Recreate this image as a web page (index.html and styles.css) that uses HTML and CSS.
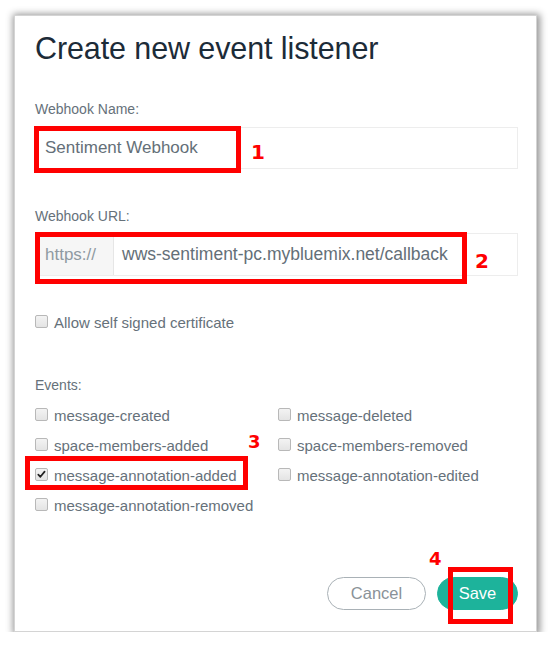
FILE: index.html
```html
<!DOCTYPE html>
<html>
<head>
<meta charset="utf-8">
<link rel="stylesheet" href="styles.css">
</head>
<body>
<div class="dialog">
  <h1 class="title">Create new event listener</h1>

  <div class="label label-name">Webhook Name:</div>
  <div class="input input-name">
    <span class="input-text">Sentiment Webhook</span>
    <span class="annot box1"></span>
    <span class="num n1">1</span>
  </div>

  <div class="label label-url">Webhook URL:</div>
  <div class="input input-url">
    <span class="prefix">https://</span>
    <span class="input-text url-text">wws-sentiment-pc.mybluemix.net/callback</span>
    <span class="annot box2"></span>
    <span class="num n2">2</span>
  </div>

  <div class="check-row allow-row"><span class="cb"></span><span class="cb-label">Allow self signed certificate</span></div>

  <div class="label label-events">Events:</div>
  <div class="events">
    <div class="check-row"><span class="cb"></span><span class="cb-label">message-created</span></div>
    <div class="check-row"><span class="cb"></span><span class="cb-label">message-deleted</span></div>
    <div class="check-row"><span class="cb"></span><span class="cb-label">space-members-added</span></div>
    <div class="check-row"><span class="cb"></span><span class="cb-label">space-members-removed</span></div>
    <div class="check-row"><span class="cb cb-checked"><svg width="11" height="11" viewBox="0 0 11 11"><path d="M2.3 5.6 L4.4 7.8 L8.6 2.6" fill="none" stroke="#222" stroke-width="1.7" stroke-linecap="round" stroke-linejoin="round"/></svg></span><span class="cb-label">message-annotation-added</span></div>
    <div class="check-row"><span class="cb"></span><span class="cb-label">message-annotation-edited</span></div>
    <div class="check-row"><span class="cb"></span><span class="cb-label">message-annotation-removed</span></div>
    <span class="annot box3"></span>
    <span class="num n3">3</span>
  </div>

  <div class="actions">
    <button class="btn btn-cancel">Cancel</button>
    <button class="btn btn-save">Save<span class="annot box4"></span><span class="num n4">4</span></button>
  </div>
</div>
</body>
</html>
```

FILE: styles.css
```css
html, body {
  margin: 0;
  padding: 0;
  background: #ffffff;
}

body {
  font-family: "Liberation Sans", Arial, sans-serif;
}

.dialog {
  position: relative;
  box-sizing: border-box;
  margin: 15px 0 0 14px;
  width: 523px;
  height: 617px;
  padding: 15px 18px 0 20px;
  background: #ffffff;
  border: 1px solid #d4d4d4;
  box-shadow: 1px 1px 7px 2px rgba(0, 0, 0, 0.42);
  display: flex;
  flex-direction: column;
}

.title {
  margin: 0;
  font-size: 30.5px;
  line-height: 34px;
  font-weight: normal;
  color: #1c2b38;
  letter-spacing: -0.1px;
}

.label {
  font-size: 14px;
  line-height: 16px;
  color: #66717a;
}

.label-name { margin-top: 36px; }
.label-url { margin-top: 39px; }
.label-events { margin-top: 40px; }

.input {
  position: relative;
  box-sizing: border-box;
  border: 1px solid #ededed;
  display: flex;
  align-items: center;
  background: #fff;
}

.input-name {
  margin-top: 10px;
  height: 42px;
  padding-left: 9px;
}

.input-url {
  margin-top: 9px;
  height: 43px;
}

.input-text {
  font-size: 17px;
  color: #646f78;
}

.url-text {
  font-size: 17.5px;
  padding-left: 8px;
}

.prefix {
  box-sizing: border-box;
  align-self: stretch;
  display: flex;
  align-items: center;
  width: 77px;
  padding-left: 8px;
  margin-left: 1px;
  background: #f6f6f6;
  border-right: 1px solid #e6e6e6;
  font-size: 17px;
  color: #8f9aa2;
}

.check-row {
  height: 30px;
  display: flex;
  align-items: center;
}

.allow-row {
  margin-top: 31px;
}

.cb {
  box-sizing: border-box;
  width: 13px;
  height: 13px;
  margin-top: -2px;
  border: 1px solid #b8b8b8;
  border-radius: 2px;
  background: linear-gradient(#f3f3f3, #e4e4e4);
  flex: none;
  display: flex;
  align-items: center;
  justify-content: center;
}

.cb svg { display: block; }

.cb-label {
  margin-left: 6px;
  font-size: 15px;
  color: #66717a;
}

.events {
  position: relative;
  margin-top: 7px;
  display: grid;
  grid-template-columns: 243px 1fr;
}

.actions {
  margin-top: 57px;
  display: flex;
  justify-content: flex-end;
  gap: 11px;
}

.btn {
  position: relative;
  box-sizing: border-box;
  height: 33px;
  border-radius: 17px;
  font-family: "Liberation Sans", Arial, sans-serif;
  font-size: 16.5px;
  padding: 0;
  cursor: pointer;
}

.btn-cancel {
  width: 99px;
  background: #ffffff;
  border: 1px solid #a9b1b6;
  color: #8a9298;
}

.btn-save {
  width: 81px;
  background: #1db39b;
  border: 1px solid #1db39b;
  color: #ffffff;
}

/* annotation overlays */
.annot {
  position: absolute;
  box-sizing: border-box;
  border: 5px solid #ff0000;
  pointer-events: none;
}

.box1 { left: -2px; top: -2px; width: 207px; height: 47px; }
.box2 { left: -1px; top: -2px; width: 432px; height: 52px; }
.box3 { left: -10px; top: 56px; width: 223px; height: 34px; }
.box4 { left: 10px; top: -11px; width: 65px; height: 57px; }

.num {
  position: absolute;
  font-family: "DejaVu Sans", Verdana, sans-serif;
  font-weight: bold;
  color: #ff0000;
}

.n1 { left: 215px; top: 14px; font-size: 20px; line-height: 20px; }
.n2 { left: 439px; top: 17px; font-size: 20px; line-height: 20px; }
.n3 { left: 213px; top: 33px; font-size: 18px; line-height: 18px; }
.n4 { left: -9px; top: -28px; font-size: 18px; line-height: 18px; }
```
